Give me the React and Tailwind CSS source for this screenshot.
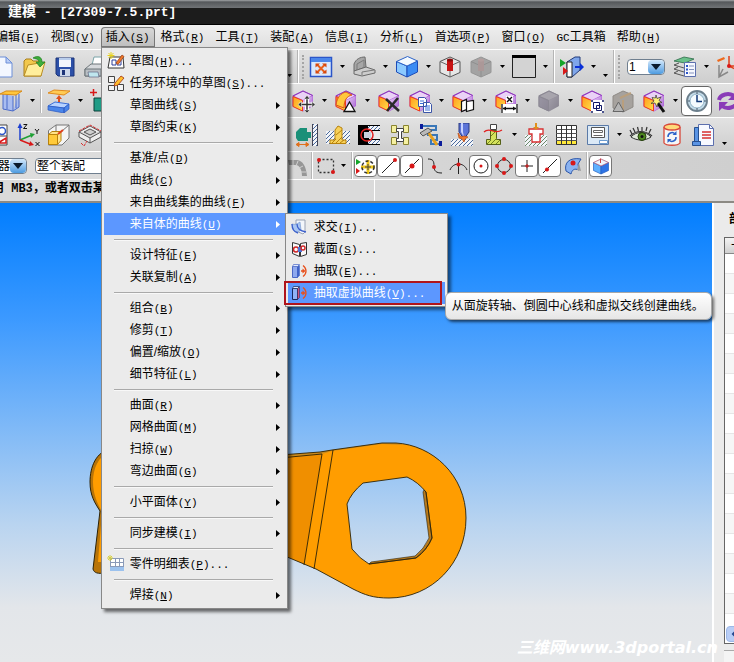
import { useId, useState } from "react";
import clsx from "clsx";

// Menu bar entries
const MENUS = [
  { label: "编辑", hotkey: "E" },
  { label: "视图", hotkey: "V" },
  { label: "插入", hotkey: "S" },
  { label: "格式", hotkey: "R" },
  { label: "工具", hotkey: "T" },
  { label: "装配", hotkey: "A" },
  { label: "信息", hotkey: "I" },
  { label: "分析", hotkey: "L" },
  { label: "首选项", hotkey: "P" },
  { label: "窗口", hotkey: "O" },
  { latin: "GC", label: "工具箱" },
  { label: "帮助", hotkey: "H" },
];

/* ---------- icons ---------- */

const Svg = ({ children }) => (
  <svg width="24" height="24" viewBox="0 0 24 24" fill="none" className="shrink-0" aria-hidden="true">
    {children}
  </svg>
);

// Shaded feature cube, the base of most modelling icons
const FeatureCube = ({ gray, children }) => {
  const id = useId();
  return (
    <Svg>
      <defs>
        <linearGradient id={`${id}l`} x1="0" y1="0" x2="1" y2="1">
          <stop offset="0" stopColor={gray ? "#9a95a3" : "#ff9a1c"} />
          <stop offset="1" stopColor={gray ? "#8b8795" : "#ffe04a"} />
        </linearGradient>
        <linearGradient id={`${id}r`} x1="0" y1="0" x2="1" y2="1">
          <stop offset="0" stopColor={gray ? "#a39faa" : "#f0d4fa"} />
          <stop offset="1" stopColor={gray ? "#86828e" : "#a35fd0"} />
        </linearGradient>
      </defs>
      <path d="M1.500 6.500 12 1.500 22 6v11l-10 5.500-10.500-5z" fill={gray ? "#96929d" : "#b060d8"} />
      <path d="M3 7 12 2.500 21 6.500 12 11z" fill={gray ? "#a8a5ad" : "#ead2f6"} />
      <path d="M2 7.500 11.500 11.500V22L2 17.500z" fill={`url(#${id}l)`} stroke={gray ? "#8b8893" : "#ef3b1e"} />
      <path d="M12 11.500 21.500 7v10L12 22z" fill={`url(#${id}r)`} />
      <path d="M2 7 12 2l9.500 4.500" stroke={gray ? "#8b8893" : "#8b35b8"} />
      {children}
    </Svg>
  );
};

const BlueCube = () => (
  <Svg>
    <path d="M1.500 6.500 12 11v11L1.500 17z" fill="#8ccaff" stroke="#1c4bb8" />
    <path d="M12 11l10.500-5v11L12 22z" fill="#3b8cf4" stroke="#1c4bb8" />
    <path d="M1.500 6.500 12.500 1.500l10 4.500L12 11z" fill="#f4faff" stroke="#2b62c8" />
  </Svg>
);

const FacetCubeIcon = () => (
  <Svg>
    <path d="M4.500 8.500 12 12v8l-7.500-3.500z" fill="#5fb0ff" stroke="#2560c0" strokeWidth=".7" />
    <path d="M12 12l7.500-3.500v8L12 20z" fill="#2f74e6" stroke="#2560c0" strokeWidth=".7" />
    <path d="M4.500 8.500 12 5l7.500 3.500L12 12z" fill="#eef6ff" stroke="#b05a7a" strokeWidth=".8" />
    <path d="M11.500 4.500V9" stroke="#d04040" />
  </Svg>
);

const NewIcon = () => (
  <Svg>
    <path d="M2 2h13l6 6v14H2z" fill="#f3f7ff" stroke="#6d8fd8" />
    <path d="M15 2v6h6z" fill="#b9cdf6" stroke="#6d8fd8" />
  </Svg>
);

const OpenIcon = () => (
  <Svg>
    <path d="M2 21V6l2-2h5l2 2h8v15z" fill="#f2c84c" stroke="#a87e1d" />
    <path d="M2 21 6 10l17-3-4 14z" fill="#ffee9c" stroke="#b98d25" />
    <path d="M11 3c5-3 9-1 9 4h3l-5 5-4-5h3c0-3-3-3-6-4z" fill="#3fae3c" stroke="#1f7e22" strokeWidth=".7" />
  </Svg>
);

const SaveIcon = () => (
  <Svg>
    <path d="M3 3h18v18H5l-2-2z" fill="#2c50a8" stroke="#1d3478" />
    <path d="M6 3h12v9H6z" fill="#f2f6fc" />
    <path d="M6 3h12v2H6z" fill="#b9cdec" />
    <path d="M7 14h10v7H7z" fill="#ccd7ea" />
    <path d="M9 15h3v5H9z" fill="#1d3478" />
  </Svg>
);

const PrintIcon = () => (
  <Svg>
    <path d="M8 10 10 2h10l-2 8z" fill="#fff" stroke="#7ba4a8" />
    <path d="M1 14l6-5h16v7l-6 5H1z" fill="#d6d9dc" stroke="#6d7579" />
    <path d="M1 14h16v7H1zM17 14l6-5" fill="#b9bfc4" stroke="#6d7579" />
    <path d="M4 17h10l1 5H5z" fill="#bfe6ee" stroke="#557" strokeWidth=".6" />
  </Svg>
);

const FitIcon = () => (
  <Svg>
    <path d="M1.500 2.500h21v19h-21z" fill="#dbe9fc" stroke="#2b55c8" strokeWidth="1.500" />
    <path d="M2 3h20v4H2z" fill="#4b86ea" />
    <path d="M8 9.500l8 8M16 9.500l-8 8" stroke="#e8601c" strokeWidth="2" />
    <path d="M6.500 8.500h4.500l-4.500 4zM17.500 8.500H13l4.500 4zM6.500 18.500h4.500l-4.500-4zM17.500 18.500H13l4.500-4z" fill="#d8480c" />
  </Svg>
);

const BracketIcon = () => (
  <Svg>
    <path d="M2 16V9c2-5 6-7 11-7l1 10z" fill="#a6a6a6" stroke="#6a6a6a" />
    <path d="M2 16l12-4 9 3v3l-13 3-8-2z" fill="#cdcdcd" stroke="#6a6a6a" />
    <path d="M10 20v-3l12-2M5 15V9l7-4v7" stroke="#7a7a7a" />
  </Svg>
);

const PinCubeIcon = ({ gray }) => (
  <Svg>
    <path
      d="M2 6.500 12 2l10 4.500v11L12 22 2 17.500z"
      fill={gray ? "#a3a3a3" : "#e6e6e6"}
      stroke={gray ? "#969696" : "#555"}
    />
    <path d="M2 6.500 12 11l10-4.500M12 11v11" stroke={gray ? "#8f8f8f" : "#666"} />
    <path d="M9 5h6v11H9z" fill={gray ? "#ab9898" : "#c81414"} />
    <ellipse cx="12" cy="5" rx="3" ry="1.500" fill={gray ? "#b39f9f" : "#8a0c0c"} />
  </Svg>
);

const FrameIcon = () => (
  <Svg>
    <path d="M.5 1.500h23v21H.5z" fill="#d3d3d3" stroke="#222" />
    <path d="M0 0h24v3H0z" fill="#000" />
  </Svg>
);

const ClipIcon = () => (
  <Svg>
    <path d="M7 7l8-5h5v13l-8 7H7z" fill="#7fa6ea" stroke="#223a7a" />
    <path d="M7 7h5v15H7z" fill="#fff" stroke="#222" />
    <path d="M15 12h6" stroke="#0a30d8" strokeWidth="2" />
    <path d="M20 8l4 4-4 4z" fill="#0a30d8" />
    <path d="M0 4l6 4-6 4z" fill="#14a52a" />
    <path d="M3 12l5 4-5 4z" fill="#d81818" />
  </Svg>
);

const LayersIcon = () => (
  <Svg>
    <path d="M1 6l10-4 10 2-9 4z" fill="#6bc08a" stroke="#2c6b47" strokeWidth=".8" />
    <path d="M1 10l10 3M1 14l10 3M1 18l10 3M1 10l5-2M1 14l4-2M1 18l4-2" stroke="#555" />
    <path d="M11.500 7.500h11v14h-11z" fill="#f6f8ff" stroke="#5c6fae" />
    <path d="M13 11h2M13 14.500h2M13 18h2" stroke="#2b55c8" strokeWidth="2" />
    <path d="M16 11h5M16 14.500h5M16 18h5" stroke="#8592bd" />
  </Svg>
);

const AxisIcon = () => (
  <Svg>
    <path d="M3 10v12l9-5M3 22l4-8" stroke="#888" strokeWidth="1.500" />
    <path d="M13 1v10h9M13 11l8 4" stroke="#e0401c" strokeWidth="1.500" />
    <path d="M1 5l7-3 1 2-7 3z" fill="#ef6a1c" />
    <circle cx="13" cy="11" r="2" fill="#d81818" />
  </Svg>
);

const ExtrudeIcon = () => (
  <Svg>
    <path d="M4 5v15l10 2V7M14 22l6-4V5" fill="#a9bdf0" stroke="#4a6ac8" />
    <path d="M8 6v14M17 5v14" stroke="#4a6ac8" />
    <path d="M1 5l6-3h16l-6 4z" fill="#ffc63c" stroke="#d88a18" />
  </Svg>
);

const PadIcon = () => (
  <Svg>
    <path d="M1 4l6-3 16 1-6 4z" fill="#ffcb54" stroke="#e08a1c" />
    <path d="M12 14V9" stroke="#e0501c" strokeWidth="2" />
    <path d="M9 10l3-4 3 4z" fill="#e0501c" />
    <path d="M1 17l7-4 14 2-5 4z" fill="#b6d2ff" stroke="#3a6fd8" />
    <path d="M1 17v4l16 3v-5zM17 19v5l5-4v-5z" fill="#4a86ea" stroke="#2b58c0" strokeWidth=".7" />
  </Svg>
);

const AddBodyIcon = () => (
  <Svg>
    <path d="M4 9h9a6 6 0 0 1 9 4v9H4z" fill="#1f9c86" stroke="#0c3f38" />
    <path d="M3.500 0v7M0 3.500h7" stroke="#d81818" strokeWidth="1.500" />
  </Svg>
);

const MoveCubeIcon = () => (
  <FeatureCube>
    <path d="M16 8v15M8.500 15.500h15" stroke="#fff" strokeWidth="4" />
    <path d="M16 8v15M8.500 15.500h15" stroke="#333" strokeWidth="1.500" />
    <path
      d="M13 10l3-3.500 3 3.500zM13 21l3 3 3-3zM10.500 12.500 7 15.500l3.500 3zM21 12.500l3 3-3 3z"
      fill="#333"
      stroke="#fff"
      strokeWidth=".5"
    />
  </FeatureCube>
);

const FaceCubeIcon = () => (
  <FeatureCube>
    <path d="M2 16C3 8 7 4 12 3l6 3c-5 1-8 5-8 13z" fill="#ffc83c" stroke="#d8501c" />
    <path d="M10 22.500 15.500 13l5.500 9.500z" fill="#fff" stroke="#111" strokeWidth="1.300" />
  </FeatureCube>
);

const DeleteCubeIcon = () => (
  <FeatureCube>
    <path d="M9 10l13 12M21 9 10 22" stroke="#2b2b2b" strokeWidth="2.500" />
  </FeatureCube>
);

const CopyCubeIcon = () => (
  <FeatureCube>
    <path d="M10.500 8.500h6l2 2v7h-8zM15.500 13.500h6l2 2v8h-8z" fill="#fff" stroke="#3a55a8" />
    <path d="M12 12h4M12 14.500h3M17 17h5M17 19h5M17 21h5" stroke="#3a6fd8" />
  </FeatureCube>
);

const ReplaceCubeIcon = () => (
  <FeatureCube>
    <path d="M10.500 12.500l5-2v10l-5 2zM15.500 12.500l7-1v9l-7 2z" fill="#fff" stroke="#111" strokeWidth="1.200" />
  </FeatureCube>
);

const DimCubeIcon = () => (
  <FeatureCube>
    <path d="M7 15h17v9H7zM12 7h7v7h-7z" fill="#fff" />
    <path d="M8 15v9M23 15v9M9 19.500h13M13 8l5 5M18 8l-5 5" stroke="#111" strokeWidth="1.300" />
    <path d="M9 19.500l3-2v4zM22 19.500l-3-2v4z" fill="#111" />
  </FeatureCube>
);

const GroupCubeIcon = () => (
  <FeatureCube>
    <path d="M11 11h13v13H11z" fill="#fff" />
    <path
      d="M13.500 13.500h6v6h-6zM16.500 16.500h5v5h-5zM11.500 11.500h1v1h-1zM22.500 11.500h1v1h-1zM11.500 22.500h1v1h-1zM22.500 22.500h1v1h-1z"
      stroke="#111a66"
    />
  </FeatureCube>
);

const GrayDeltaIcon = () => (
  <Svg>
    <path d="M2 7l10-5 10 4v12l-10 5-10-4z" fill="#a6a29e" stroke="#8e8a86" />
    <path d="M9 9l11-5M12 11v12" stroke="#b99f7e" strokeWidth="2" />
    <path d="M2 22.500 7.500 13l5.500 9.500z" fill="#b5b5b5" stroke="#666" />
  </Svg>
);

const WandCubeIcon = () => (
  <FeatureCube>
    <path d="M15 13l7 10" stroke="#111" strokeWidth="3" />
    <path
      d="M14 6l1 3.500 4-1.500-2 3.500 3 2-4 .5-1 4-2-4-4 .5 3-2.500-2-3.500 3.500.5z"
      fill="#fff27a"
      stroke="#333"
      strokeWidth=".7"
    />
  </FeatureCube>
);

const ClockIcon = () => (
  <Svg>
    <circle cx="12" cy="12" r="10" fill="#c4dcea" stroke="#6c7f8c" strokeWidth="1.800" />
    <circle cx="12" cy="12" r="7" fill="#f4fbff" stroke="#93b4c8" />
    <path d="M12 6v6.500h5" stroke="#123a78" strokeWidth="1.500" />
    <path d="M12 3v2M12 19v2M3 12h2M19 12h2" stroke="#456" />
  </Svg>
);

const RefreshIcon = () => (
  <Svg>
    <path d="M3 11a9 7 0 0 1 15-4M21 13a9 7 0 0 1-15 4" stroke="#8a3cb8" strokeWidth="4" />
    <path d="M21 2v9h-9zM3 22v-9h9z" fill="#8a3cb8" />
  </Svg>
);

const SheetIcon = () => (
  <Svg>
    <path d="M2 2h20v20H2z" fill="#fff" stroke="#444" />
    <circle cx="17" cy="8" r="3.500" stroke="#2b55c8" strokeWidth="1.500" />
    <path d="M13 20l8-5v5z" stroke="#d81818" strokeWidth="1.500" />
    <path d="M2 13h20" stroke="#444" />
  </Svg>
);

const CsysIcon = () => (
  <Svg>
    <path d="M4 17V3" stroke="#1c3fd0" strokeWidth="1.500" />
    <path d="M1.500 5 4 0l2.500 5z" fill="#1c3fd0" />
    <path d="M4 17l12-5" stroke="#1fa035" strokeWidth="1.500" />
    <path d="M14 10l5 1-4 4z" fill="#1fa035" />
    <path d="M4 17l10 4" stroke="#d81818" strokeWidth="1.500" />
    <path d="M14 18l4 4-5 1z" fill="#d81818" />
    <path d="M7.500 1.500h3.500l-3.500 4H11M19 6l2 2.500L23 6M21 8.500V11M19.500 19l4 4M23.500 19l-4 4" stroke="#111" />
  </Svg>
);

const WireBoxIcon = () => (
  <Svg>
    <path d="M1.500 7.500 9 2h13v13l-7 7H1.500zM22 2l-7 6M9 2v8" fill="#f4f4f4" stroke="#777" />
    <path d="M1.500 11.500h9v10h-9z" fill="#ffca3a" stroke="#b8820c" />
    <path d="M1.500 11.500 5 8.500h9l-3.500 3zM10.500 21.500v-10l3.500-3v9z" fill="#ffe38a" stroke="#b8820c" />
    <path d="M11 11l5-4" stroke="#e0401c" strokeWidth="2" />
  </Svg>
);

const SectionFrameIcon = () => (
  <Svg>
    <path d="M1 9l11-6 11 6-11 6zM1 9v5l11 6 11-6V9M12 15v5" stroke="#555" fill="#eee" />
    <path d="M6 9l6-3 6 3-6 3z" fill="#cfcfcf" stroke="#555" />
    <path d="M1 8l11-6 11 6M3 20l3 3 3-5" stroke="#d83030" strokeDasharray="3 1" />
  </Svg>
);

// Hatched ground used by several feature icons
const Hatch = ({ x, y, w, h, color = "#4a6a9c" }) => {
  const id = useId();
  return (
    <>
      <defs>
        <pattern id={id} width="4" height="4" patternUnits="userSpaceOnUse">
          <path d="M-1 5 5-1M-1 1 1-1M3 5 5 3" stroke={color} strokeWidth="1" />
        </pattern>
      </defs>
      <rect x={x} y={y} width={w} height={h} fill="#f2f4f8" />
      <rect x={x} y={y} width={w} height={h} fill={`url(#${id})`} />
    </>
  );
};

const HoleIcon = () => (
  <Svg>
    <path d="M1 9l4-4h7v4h4v6h-3v3H3l-2-3z" fill="#1a9078" />
    <path d="M2 21.500h11M4 19.500l-3 2 3 2zM11 19.500l3 2-3 2z" stroke="#e0701c" fill="#e0701c" />
    <Hatch x={18} y={1} w={4} h={22} />
    <path d="M17.500 1v22M22.500 1v22" stroke="#445" />
  </Svg>
);

const BossIcon = () => (
  <Svg>
    <Hatch x={0} y={8} w={24} h={13} />
    <path d="M4 20.500V17h5V7l3-4 4 2v12h4v3.500z" fill="#f7d15a" stroke="#b8820c" />
    <path d="M6 20l4-4M10 20l6-6M14 20l4-3M10 12l6-5" stroke="#b8820c" />
  </Svg>
);

const PocketIcon = () => (
  <Svg>
    <path d="M1 2h22v20H1z" fill="#000" />
    <Hatch x={11} y={3} w={12} h={4} />
    <Hatch x={11} y={17} w={12} h={4} />
    <path d="M12 8h11v8H12z" fill="#e9e9e9" />
    <path d="M7 9h7v6H7z" fill="#c8d0dc" />
    <circle cx="10" cy="12" r="6" stroke="#e02020" strokeWidth="1.500" />
  </Svg>
);

const GrooveIcon = () => (
  <Svg>
    <path d="M3.500 2.500h5v7h-5zM15.500 2.500h5v7h-5zM3.500 14.500h5v7h-5zM15.500 14.500h5v7h-5z" fill="#f5f0a0" stroke="#8a8430" />
    <path d="M8.500 5.500h7v3h-2v7h2v3h-7v-3h2v-7h-2z" fill="#fff" stroke="#444" />
  </Svg>
);

const HammerIcon = () => (
  <Svg>
    <path d="M3 3h14v4H9v5h9v5h-6v4h8" stroke="#3a77b8" strokeWidth="2" />
    <path d="M1 1h3v5H1zM20 18h3v5h-3z" fill="#0c1c9a" />
    <path d="M9 9l9 13" stroke="#e8a01c" strokeWidth="3" />
    <path d="M1 10l8-5 4 3-9 5z" fill="#b9b9b9" stroke="#555" />
  </Svg>
);

const DrillIcon = () => (
  <Svg>
    <Hatch x={1} y={16} w={22} h={7} />
    <path d="M9 0h10v9l-5 7-5-7z" fill="#5c74d8" stroke="#27377f" />
    <path d="M11 0h2v9l1 5-3-5z" fill="#c6d1ff" />
    <path d="M8 10l3 4 3-1 4 1-3 2-1 3-2-3-3-1z" fill="#ef7a2c" stroke="#c04a10" strokeWidth=".7" />
  </Svg>
);

const RibIcon = () => (
  <Svg>
    <path d="M9.500 7.500h6v9h4v5h-14v-5h4z" fill="#d4e25c" stroke="#556018" />
    <path d="M6 21l4-4M10 21l6-6M15 21l4-4M10 13l5-5" stroke="#708020" />
    <path d="M9.500 1.500h6v5h-6z" fill="#fff" stroke="#444" />
    <path d="M3 9c3-3 6-2 9-1s6 1 9-1" stroke="#e02020" strokeWidth="1.300" />
  </Svg>
);

const FlangeIcon = () => (
  <Svg>
    <Hatch x={1} y={12} w={22} h={11} color="#6c8a6a" />
    <path d="M5 6h14v5h-3v8H8v-8H5z" fill="#fff" stroke="#d83030" strokeWidth="1.300" />
    <path d="M12 0v6" stroke="#e0901c" strokeWidth="2" />
    <path d="M9 4l3 3 3-3z" fill="#e0901c" />
  </Svg>
);

const GridIcon = () => (
  <Svg>
    <path d="M1.500 2.500h20v19h-20z" fill="#fff" stroke="#333" />
    <path d="M2 18h19v3H2z" fill="#ffe93a" />
    <path d="M1 6.500h21M1 10.500h21M1 14.500h21M1 17.500h21" stroke="#555" />
    <path d="M6.500 2v20M11.500 2v20M16.500 2v20" stroke="#333" />
  </Svg>
);

const TitleBlockIcon = () => (
  <Svg>
    <path d="M1.500 2.500h21v19h-21z" fill="#dbe9f6" stroke="#5a7aa8" />
    <path d="M5.500 4.500h13v10h-13z" fill="#fff" stroke="#555" />
    <path d="M7.500 7.500h9v2h-9zM7.500 12.500h9" stroke="#666" />
    <path d="M13.500 17.500h8v3h-8z" fill="#fff" stroke="#6c9cd0" />
  </Svg>
);

const EyeIcon = () => (
  <Svg>
    <path d="M2 14c5-6 15-6 20 0-6 4-14 4-20 0z" fill="#dfe8da" stroke="#333" />
    <circle cx="13" cy="13.500" r="4" fill="#4f8a20" stroke="#223c0c" />
    <circle cx="13" cy="13.500" r="1.500" fill="#111" />
    <path
      d="M1 13c6-6 15-6 22 0M3 11 1 7M6 9 4 5M9.500 8l-1-4M13 8V4M17 8l1-4M20 10l2-4"
      stroke="#333"
      strokeWidth="1.200"
    />
  </Svg>
);

const BarrelIcon = () => (
  <Svg>
    <path d="M4 4v16c2 3 14 3 16 0V4" fill="#f6f6f6" stroke="#d8483a" strokeWidth="1.300" />
    <ellipse cx="12" cy="4" rx="8" ry="3" fill="#ffd97a" stroke="#d8483a" strokeWidth="1.300" />
    <path d="M8 14a4 4 0 0 1 7-3M16 14a4 4 0 0 1-7 3" stroke="#2b60c8" strokeWidth="1.500" />
    <path d="M16.500 8v4h-4zM7.500 20v-4h4z" fill="#2b60c8" />
  </Svg>
);

const ReportIcon = () => (
  <Svg>
    <path d="M7.500 1.500h11l4 4v17h-15z" fill="#f7f9ff" stroke="#5c6fae" />
    <path d="M18.500 1.500v4h4" stroke="#5c6fae" />
    <path d="M11 9h9M11 12h9M11 15h9" stroke="#d83030" strokeWidth="1.300" />
    <path d="M3.500 4.500h4v14h-4zM1.500 18.500h8v4h-8z" fill="#5a94e4" stroke="#27508f" />
  </Svg>
);

const FilletIcon = () => (
  <Svg>
    <path d="M2 6h9c6 1 9 6 10 16h-5c0-7-3-11-6-11H3z" fill="#969696" />
    <path d="M7 6v5M12 7l-2 5M17 12l-4 2M20 18h-5" stroke="#d0d0d0" />
  </Svg>
);

const MarqueeIcon = () => (
  <Svg>
    <path d="M4.500 5.500h15v13h-15z" stroke="#333" strokeWidth="1.300" strokeDasharray="2 2" />
    <circle cx="5" cy="6" r="2" fill="#d81818" />
    <circle cx="19" cy="18" r="2" fill="#d81818" />
  </Svg>
);

const SnapAllIcon = () => (
  <Svg>
    <path d="M2 5l5 3-5 3z" fill="#14a52a" />
    <path d="M2 14l4 3-4 3z" fill="#d81818" />
    <path d="M14 6v14M7 13h14" stroke="#f0c818" strokeWidth="3" />
    <circle cx="14" cy="13" r="6" stroke="#333" strokeDasharray="3 2" strokeWidth="1.500" />
    <path d="M14 10v6M11 13h6" stroke="#444" />
  </Svg>
);

const EndPointIcon = () => (
  <Svg>
    <path d="M5 19 18 6" stroke="#222" />
    <circle cx="18" cy="6" r="2" fill="#d81818" />
  </Svg>
);

const MidPointIcon = () => (
  <Svg>
    <path d="M5 19 19 5" stroke="#222" />
    <circle cx="12" cy="12" r="2.500" fill="#d81818" />
  </Svg>
);

const PolePointIcon = () => (
  <Svg>
    <path d="M5 5c5 0 6 2 6 7s2 7 8 7" stroke="#222" />
    <circle cx="11" cy="13" r="2" fill="#d81818" />
  </Svg>
);

const CrossPointIcon = () => (
  <Svg>
    <path d="M12.500 4v16M4 16c3-8 14-8 17 0" stroke="#222" />
    <circle cx="12.500" cy="10.500" r="2" fill="#d81818" />
  </Svg>
);

const CenterPointIcon = () => (
  <Svg>
    <circle cx="12" cy="12" r="7" stroke="#222" />
    <circle cx="12" cy="12" r="1.500" fill="#d81818" />
  </Svg>
);

const QuadrantIcon = () => (
  <Svg>
    <circle cx="12" cy="12" r="6.500" stroke="#222" />
    <circle cx="12" cy="5" r="2" fill="#d81818" />
    <circle cx="12" cy="19" r="2" fill="#d81818" />
    <circle cx="5" cy="12" r="2" fill="#d81818" />
    <circle cx="19" cy="12" r="2" fill="#d81818" />
  </Svg>
);

const PlusPointIcon = () => (
  <Svg>
    <path d="M12 6v12M6 12h12" stroke="#222" />
    <path d="M12 10v4M10 12h4" stroke="#d81818" />
  </Svg>
);

const OnCurveIcon = () => (
  <Svg>
    <path d="M5 19 19 5" stroke="#222" />
    <circle cx="9" cy="15.500" r="2" fill="#d81818" />
  </Svg>
);

const OnFaceIcon = () => (
  <Svg>
    <path d="M5 17C3 9 8 3 20 5l-3 5 1 6c-5-2-7 0-8 4z" fill="#8ab2f0" stroke="#2b55a8" />
    <path d="M18 9l2 8-4-1" fill="#9a9a9a" />
    <circle cx="12" cy="9" r="2.500" fill="#d81818" />
  </Svg>
);

const SketchIcon = () => (
  <svg width="18" height="18" viewBox="0 0 18 18" fill="none" aria-hidden="true">
    <path d="M3 5h13l1 11H1z" fill="#fff" stroke="#333" />
    <path d="M5 8h4v5H5zM10 13h4V8" stroke="#2b3f9a" />
    <path d="M9 11l6-8 2 1.500-6 8z" fill="#ef7a2c" stroke="#93330c" strokeWidth=".7" />
    <path d="M4 0v7M.5 3.500h7M1.500 1l5 5M6.500 1l-5 5" stroke="#e8d21c" />
  </svg>
);

const TaskSketchIcon = () => (
  <svg width="18" height="18" viewBox="0 0 18 18" fill="none" aria-hidden="true">
    <path d="M1.500 2.500h6v6h-6zM1.500 11.500h6v5h-6zM10.500 10.500h6v6h-6z" fill="#f4f4f4" stroke="#444" />
    <path d="M8 9l6-7 3 2-6 7-4 1z" fill="#ffbe2c" stroke="#a03010" strokeWidth=".8" />
  </svg>
);

const PartsListIcon = () => (
  <svg width="18" height="18" viewBox="0 0 18 18" fill="none" aria-hidden="true">
    <path d="M3.500 3.500h13v12h-13z" fill="#fff" stroke="#8a9ab8" />
    <path d="M3 12h14v4H3z" fill="#9cc2ee" />
    <path d="M3 7.500h14M3 11.500h14M8.500 3v9M12.500 3v9" stroke="#8a9ab8" />
    <path d="M3 0v6M0 3h6M1 1l4 4M5 1 1 5" stroke="#d8d040" />
  </svg>
);

const IntersectIcon = () => (
  <svg width="18" height="18" viewBox="0 0 18 18" fill="none" aria-hidden="true">
    <path d="M5 2h9v12l-2 2-7-3z" fill="#f3f6fb" stroke="#9aa3b5" />
    <path d="M1 6c3 1 5 0 8-2l1 8c-3 3-7 2-8-1z" fill="#a9c6f2" stroke="#7d9cd0" strokeWidth=".7" />
    <path d="M6 6c0 5 3 7 9 8M1 6c0 5 2 8 6 9" stroke="#3b5fcc" strokeWidth="1.300" />
  </svg>
);

const SectionIcon = () => (
  <svg width="18" height="18" viewBox="0 0 18 18" fill="none" aria-hidden="true">
    <path d="M1.500 2.500l7 2v12l-7-3zM9.500 3.500l6-1v12l-6 2z" fill="#f8f8f8" stroke="#333" />
    <circle cx="5" cy="9.500" r="2.500" stroke="#d02828" strokeWidth="1.500" />
    <path d="M7 7h4v5H7z" fill="#4f72d8" />
    <circle cx="12" cy="8" r="2" stroke="#d02828" strokeWidth="1.500" />
  </svg>
);

const ExtractIcon = ({ hollow }) => (
  <svg width="18" height="18" viewBox="0 0 18 18" fill="none" aria-hidden="true">
    <path d="M1.500 4.500h5v11h-5z" fill={hollow ? "#8fb2f5" : "#8fa9ee"} stroke={hollow ? "#16285c" : "#4c68c4"} />
    <path d="M6.500 3.500h2v10l-2 2z" fill={hollow ? "#d05078" : "#3f62c8"} stroke={hollow ? "#16285c" : "#3f62c8"} strokeWidth=".5" />
    <path d="M1.500 4.500l1-2h6l-2 2z" fill="#e3ecff" stroke={hollow ? "#16285c" : "#4c68c4"} strokeWidth=".7" />
    <path d="M10 9h3M12 3.500c4 3 4 8 0 11" stroke="#e8501c" strokeWidth="1.300" />
    <path d="M11.500 6.500 14.500 9l-3 2.500z" fill="#e8501c" />
  </svg>
);

// "插入" menu, split in groups by separators
const INSERT_GROUPS = [
  [
    { label: "草图", hotkey: "H", dots: true, icon: SketchIcon },
    { label: "任务环境中的草图", hotkey: "S", dots: true, icon: TaskSketchIcon },
    { label: "草图曲线", hotkey: "S" },
    { label: "草图约束", hotkey: "K" },
  ],
  [
    { label: "基准/点", hotkey: "D" },
    { label: "曲线", hotkey: "C" },
    { label: "来自曲线集的曲线", hotkey: "F" },
    { label: "来自体的曲线", hotkey: "U", open: true },
  ],
  [
    { label: "设计特征", hotkey: "E" },
    { label: "关联复制", hotkey: "A" },
  ],
  [
    { label: "组合", hotkey: "B" },
    { label: "修剪", hotkey: "T" },
    { label: "偏置/缩放", hotkey: "O" },
    { label: "细节特征", hotkey: "L" },
  ],
  [
    { label: "曲面", hotkey: "R" },
    { label: "网格曲面", hotkey: "M" },
    { label: "扫掠", hotkey: "W" },
    { label: "弯边曲面", hotkey: "G" },
  ],
  [{ label: "小平面体", hotkey: "Y" }],
  [{ label: "同步建模", hotkey: "I" }],
  [{ label: "零件明细表", hotkey: "P", dots: true, icon: PartsListIcon }],
  [{ label: "焊接", hotkey: "N" }],
];

const BODY_CURVE_ITEMS = [
  { label: "求交", hotkey: "I", icon: IntersectIcon },
  { label: "截面", hotkey: "S", icon: SectionIcon },
  { label: "抽取", hotkey: "E", icon: ExtractIcon },
];

/* ---------- toolbar pieces ---------- */

const Tool = ({ icon: Icon, gray, label }) => (
  <button type="button" aria-label={label} className="flex h-6 w-[31px] shrink-0 items-center justify-center">
    <Icon gray={gray} />
  </button>
);

const SnapTool = ({ icon: Icon, boxed, label }) => (
  <button
    type="button"
    aria-label={label}
    className={clsx(
      "flex h-[22px] w-[23px] shrink-0 items-center justify-center overflow-hidden",
      boxed && "rounded-sm border border-[#777] bg-white"
    )}
  >
    <Icon />
  </button>
);

const Caret = ({ low }) => (
  <span className={clsx("flex w-3 shrink-0 justify-center", low && "self-end pb-1.5")}>
    <svg width="5" height="3" viewBox="0 0 5 3" aria-hidden="true">
      <path d="M0 0h5L2.500 3z" fill="#000" />
    </svg>
  </span>
);

const Divider = () => (
  <span className="flex w-[5px] shrink-0 justify-center self-stretch">
    <span className="w-0.5 border-l border-[#b5b5b5] bg-white" />
  </span>
);

const Grip = () => (
  <span className="flex w-[5px] shrink-0 justify-center">
    <span className="h-6 border-l-2 border-dotted border-[#a5a5a5]" />
  </span>
);

const Bar = ({ children }) => (
  <div className="flex h-[34px] items-center overflow-hidden border-t border-white bg-gradient-to-b from-[#e2e2e2] to-[#cecece]">
    {children}
  </div>
);

const Combo = ({ label, value, className }) => (
  <span className={clsx("flex h-4 shrink-0 items-stretch rounded-sm border border-[#6f7f8f] bg-white", className)}>
    <select aria-label={label} className="min-w-0 flex-1 appearance-none bg-transparent pl-px text-xs leading-none text-black">
      <option>{value}</option>
    </select>
    <span className="pointer-events-none flex w-4 items-center justify-center rounded-sm bg-gradient-to-b from-[#d3e8fa] to-[#4b9be0]">
      <svg width="10" height="6" viewBox="0 0 10 6" aria-hidden="true">
        <path d="M0 0h10L5 6z" fill="#0a1a2c" />
      </svg>
    </span>
  </span>
);

// Menu caption with its underlined access key
const Caption = ({ latin, label, hotkey, dots }) => (
  <span className="whitespace-nowrap">
    {latin && <span className="font-['Liberation_Mono',monospace] text-[11px]">{latin}</span>}
    {label}
    {hotkey && (
      <span className="font-['Liberation_Mono',monospace] text-[11px]">
        (<u className="underline-offset-1">{hotkey}</u>){dots && "..."}
      </span>
    )}
  </span>
);

const MenuRow = ({ item, active, children }) => (
  <li className="relative">
    <button
      type="button"
      className={clsx(
        "flex h-[22px] w-full items-center pr-[5px] text-left",
        active ? "bg-[#5c97ff] text-white" : "text-black"
      )}
    >
      <span className="flex w-[26px] shrink-0 justify-center pr-0.5">{item.icon && <item.icon hollow={active} />}</span>
      <Caption {...item} />
      {!item.dots && (
        <svg width="4" height="7" viewBox="0 0 4 7" className="ml-auto" aria-hidden="true">
          <path d="M0 0v7l4-3.500z" fill="currentColor" />
        </svg>
      )}
    </button>
    {children}
  </li>
);

const BodyCurveMenu = () => (
  <ul className="absolute top-0 left-full w-[163px] border border-[#888] bg-[#ebebeb] p-0.5 shadow-[3px_3px_3px_rgba(0,0,0,0.5)]">
    {BODY_CURVE_ITEMS.map((item) => (
      <MenuRow key={item.label} item={{ ...item, dots: true }} />
    ))}
    <MenuRow item={{ label: "抽取虚拟曲线", hotkey: "V", dots: true, icon: ExtractIcon }} active>
      <span className="pointer-events-none absolute -top-px right-[3px] -left-1 h-6 border-2 border-[#b0141c]" />
      <span
        role="tooltip"
        className="absolute top-[10px] left-full flex h-7 w-[267px] items-center rounded-md border border-[#a8a8a8] bg-gradient-to-b from-white to-[#e6e6e6] px-1.5 whitespace-nowrap text-black shadow-[2px_2px_3px_rgba(0,0,0,0.6)]"
      >
        从面旋转轴、倒圆中心线和虚拟交线创建曲线。
      </span>
    </MenuRow>
  </ul>
);

const InsertMenu = () => (
  <div className="absolute top-full left-0 z-20 w-[187px] border border-[#888] bg-[#ebebeb] p-0.5 shadow-[3px_3px_3px_rgba(0,0,0,0.55)]">
    {INSERT_GROUPS.map((group, i) => (
      <div key={i}>
        {i > 0 && (
          <div className="flex h-[9px] items-center pr-3 pl-2.5">
            <span className="h-0.5 flex-1 border-t border-[#a9a9a9] bg-[#f8f8f8]" />
          </div>
        )}
        <ul>
          {group.map((item) => (
            <MenuRow key={item.label} item={item} active={item.open}>
              {item.open && <BodyCurveMenu />}
            </MenuRow>
          ))}
        </ul>
      </div>
    ))}
  </div>
);

const MenuBar = () => {
  const [open, setOpen] = useState("插入");

  return (
    <nav className="relative flex h-6 items-center bg-gradient-to-b from-[#efefef] to-[#dedede]">
      <div className="-ml-[9px] flex gap-px">
        {MENUS.map((menu) => (
          <div key={menu.label} className="relative">
            <button
              type="button"
              onClick={() => setOpen(open === menu.label ? null : menu.label)}
              className={clsx(
                "flex h-5 items-center px-[5px]",
                open === menu.label && "rounded-t-sm bg-gradient-to-b from-[#dadada] to-[#bdbdbd] ring-1 ring-[#777] ring-inset"
              )}
            >
              <Caption {...menu} />
            </button>
            {menu.label === "插入" && open === "插入" && <InsertMenu />}
          </div>
        ))}
      </div>
    </nav>
  );
};

const Toolbars = () => (
  <>
    <Bar>
      <div className="w-[283px] shrink-0">
        <div className="-ml-[13px] flex items-center">
          <Tool icon={NewIcon} label="新建" />
          <Tool icon={OpenIcon} label="打开" />
          <Tool icon={SaveIcon} label="保存" />
          <Tool icon={PrintIcon} label="打印" />
        </div>
      </div>
      <Caret low />
      <Divider />
      <Grip />
      <Tool icon={FitIcon} label="适合窗口" />
      <Caret />
      <Tool icon={BracketIcon} label="定向" />
      <Caret />
      <Tool icon={BlueCube} label="着色" />
      <Caret />
      <Tool icon={PinCubeIcon} label="透视" />
      <Tool icon={PinCubeIcon} gray label="隐藏边" />
      <Caret />
      <Tool icon={FrameIcon} label="背景" />
      <Caret />
      <Divider />
      <Tool icon={ClipIcon} label="剪切截面" />
      <Caret />
      <Caret low />
      <Divider />
      <Grip />
      <Combo label="工作图层" value="1" className="mr-1 ml-1.5 w-[38px]" />
      <Tool icon={LayersIcon} label="图层设置" />
      <Caret />
      <Tool icon={AxisIcon} label="坐标系" />
    </Bar>

    <Bar>
      <div className="w-[287px] shrink-0">
        <div className="-ml-[5px] flex items-center">
          <Tool icon={ExtrudeIcon} label="拉伸" />
          <Caret />
          <Divider />
          <Tool icon={PadIcon} label="凸台" />
          <Caret />
          <Tool icon={AddBodyIcon} label="求和" />
        </div>
      </div>
      <Tool icon={MoveCubeIcon} label="移动面" />
      <Caret />
      <Tool icon={FaceCubeIcon} label="偏置区域" />
      <Caret />
      <Tool icon={DeleteCubeIcon} label="删除面" />
      <Tool icon={CopyCubeIcon} label="复制面" />
      <Caret />
      <Tool icon={ReplaceCubeIcon} label="替换面" />
      <Caret />
      <Tool icon={DimCubeIcon} label="线性尺寸" />
      <Caret />
      <Tool icon={FeatureCube} gray label="壳" />
      <Caret />
      <Tool icon={GroupCubeIcon} label="组面" />
      <Tool icon={GrayDeltaIcon} label="编辑截面" />
      <Tool icon={WandCubeIcon} label="优化面" />
      <Caret />
      <button
        type="button"
        aria-label="历史模式"
        className="flex h-[30px] w-[31px] shrink-0 items-center justify-center rounded-sm border border-[#666] bg-white"
      >
        <ClockIcon />
      </button>
      <Tool icon={RefreshIcon} label="刷新" />
    </Bar>

    <Bar>
      <div className="w-[291px] shrink-0">
        <div className="-ml-[19px] flex items-center">
          <Tool icon={SheetIcon} label="图纸" />
          <Tool icon={CsysIcon} label="基准坐标系" />
          <Tool icon={WireBoxIcon} label="包容体" />
          <Tool icon={SectionFrameIcon} label="截面框" />
        </div>
      </div>
      <Tool icon={HoleIcon} label="孔" />
      <Tool icon={BossIcon} label="凸起" />
      <Tool icon={PocketIcon} label="腔体" />
      <Tool icon={GrooveIcon} label="槽" />
      <Tool icon={HammerIcon} label="加工准备" />
      <Tool icon={DrillIcon} label="钻孔" />
      <Tool icon={RibIcon} label="筋" />
      <Caret />
      <Tool icon={FlangeIcon} label="法兰" />
      <Tool icon={GridIcon} label="表格" />
      <Tool icon={TitleBlockIcon} label="标题栏" />
      <Caret />
      <Tool icon={EyeIcon} label="显示" />
      <Tool icon={BarrelIcon} label="更新" />
      <Tool icon={ReportIcon} label="报告" />
      <Caret low />
    </Bar>

    <div className="flex h-7 items-center overflow-hidden border-t border-white bg-gradient-to-r from-[#dedede] to-[#cfcfcf]">
      <div className="w-[286px] shrink-0">
        <div className="-ml-4 flex items-center gap-2">
          <Combo label="类型过滤器" value="选择过滤器" className="w-[43px] flex-row-reverse [direction:rtl]" />
          <Combo label="选择范围" value="整个装配" className="w-[130px]" />
        </div>
      </div>
      <SnapTool icon={FilletIcon} label="圆角" />
      <Divider />
      <SnapTool icon={MarqueeIcon} label="矩形选择" />
      <Caret />
      <Divider />
      <SnapTool icon={SnapAllIcon} boxed label="启用捕捉点" />
      <SnapTool icon={EndPointIcon} boxed label="端点" />
      <SnapTool icon={MidPointIcon} boxed label="中点" />
      <SnapTool icon={PolePointIcon} label="控制点" />
      <SnapTool icon={CrossPointIcon} label="交点" />
      <SnapTool icon={CenterPointIcon} boxed label="圆弧中心" />
      <SnapTool icon={QuadrantIcon} label="象限点" />
      <SnapTool icon={PlusPointIcon} boxed label="现有点" />
      <SnapTool icon={OnCurveIcon} boxed label="曲线上的点" />
      <SnapTool icon={OnFaceIcon} label="面上的点" />
      <Divider />
      <SnapTool icon={FacetCubeIcon} boxed label="小平面体上的顶点" />
    </div>
  </>
);

// Shaded link part shown in the graphics window
const LinkPart = () => (
  <svg
    width="380"
    height="164"
    viewBox="88 438 380 164"
    className="absolute top-[235px] left-[88px]"
    role="img"
    aria-label="27309-7.5.prt"
  >
    <path d="M110 449c-14 3-20 18-20 33 0 14 5 21 10 29l-7 58c1 4 5 5 12 4h5z" fill="#b87408" stroke="#2b2208" />
    <path d="M110 452c-12 4-17 17-17 30 0 14 6 24 9 30l-4 50h12z" fill="#ff9d00" />
    <path d="M101 543h4v11h-4z" fill="#ffe45c" />
    <path
      fillRule="evenodd"
      d="M280 455l40-3 12-2 50-7h14c36 2 70 32 70 75 0 45-34 80-77 80-16 0-24-3-36-9l-37-20-36-15zM363 483l44-6q11 5 19 15l6 46q-5 12-16 20l-47 6q-9-5-17-15l-5-45q4-11 16-21z"
      fill="#ff9d00"
    />
    <path d="M280 457l42-3-18 110-24-11z" fill="#f08f00" />
    <path d="M280 455l40-3 12-2 50-7h14l8 2-22-1-50 7-10 3-42 3z" fill="#c98a1e" />
    <path
      d="M280 455l40-3 12-2 50-7h14c36 2 70 32 70 75 0 45-34 80-77 80-16 0-24-3-36-9l-37-20-36-15M322 454l-18 111M333 450l-19 119M280 458l42-4"
      stroke="#2b2208"
      strokeWidth=".9"
      fill="none"
    />
    <path d="M424 490l2 2 6 46q-5 12-16 20l-47 6 2-2 44-6q9-7 14-18l-6-46z" fill="#b87a1c" stroke="#2b2208" strokeWidth=".6" />
    <path
      d="M363 483l44-6q11 5 19 15l6 46q-5 12-16 20l-47 6q-9-5-17-15l-5-45q4-11 16-21z"
      fill="none"
      stroke="#2b2208"
      strokeWidth=".9"
    />
  </svg>
);

const ResourcePanel = () => (
  <aside className="flex w-[22px] shrink-0 flex-col overflow-hidden border-l-2 border-white bg-[#ebebeb] pl-2.5">
    <h2 className="w-20 pt-2 pl-[5px] text-xs leading-4 font-bold whitespace-nowrap">部件导航器</h2>
    <div className="mt-2.5 flex w-60 flex-1 flex-col border border-[#666] bg-white">
      <div className="h-4 border-b border-[#888] bg-gradient-to-b from-[#f4f4f4] to-[#d0d0d0] pl-1.5 text-xs leading-4">卡片</div>
      <div className="flex-1 bg-[repeating-linear-gradient(to_bottom,#fff_0px,#fff_19px,#e6e6e6_19px,#e6e6e6_20px,#f6f6f6_20px,#f6f6f6_39px,#e6e6e6_39px,#e6e6e6_40px)]" />
      <button
        type="button"
        aria-label="向左滚动"
        className="m-px flex h-4 w-4 items-center justify-center rounded-sm border border-[#9db8e8] bg-[#b8cdf6]"
      >
        <svg width="6" height="8" viewBox="0 0 6 8" fill="none" aria-hidden="true">
          <path d="M5 1 2 4l3 3" stroke="#24458c" strokeWidth="2" />
        </svg>
      </button>
    </div>
    <div className="mt-1.5 h-3 border-t border-[#aaa] bg-[#f4f4f4]" />
  </aside>
);

export default function App() {
  return (
    <div className="relative flex min-h-screen flex-col overflow-hidden bg-[#dcdcdc] font-['Liberation_Sans','Noto_Sans_CJK_SC',sans-serif] text-xs text-black">
      <header className="h-[25px] border-b border-black bg-[linear-gradient(to_bottom,#a2a5a7_0px,#55585b_2px,#707376_8px,#1c1c1c_8px)] pl-2">
        <h1 className="text-sm leading-[22px] font-bold whitespace-nowrap text-white">
          建模
          <span className="font-['Liberation_Mono',monospace] text-[13px] whitespace-pre"> - [27309-7.5.prt]</span>
        </h1>
      </header>

      <MenuBar />
      <Toolbars />

      <div className="flex h-6 overflow-hidden border-t border-b-2 border-t-white border-b-[#8c8a84] bg-[#dadada]">
        <p className="w-[375px] shrink-0 border-r border-white leading-4 font-bold whitespace-nowrap">
          <span className="-ml-2 inline-block">
            用<span className="font-['Liberation_Mono',monospace] whitespace-pre"> MB3</span>，或者双击某
          </span>
        </p>
      </div>

      <main className="flex flex-1">
        <div className="relative flex-1 overflow-hidden bg-[linear-gradient(to_bottom,#007dff_0%,#3b99ff_25%,#7fb9f7_49%,#b9d4f0_70%,#e3e6ea_88%,#e6e8ea_100%)]">
          <LinkPart />
        </div>
        <ResourcePanel />
      </main>

      <p className="absolute right-4 bottom-0.5 font-['DejaVu_Sans','Noto_Sans_CJK_SC',sans-serif] text-base leading-6 font-bold whitespace-nowrap text-white italic">
        三维网www.3dportal.cn
      </p>
    </div>
  );
}
